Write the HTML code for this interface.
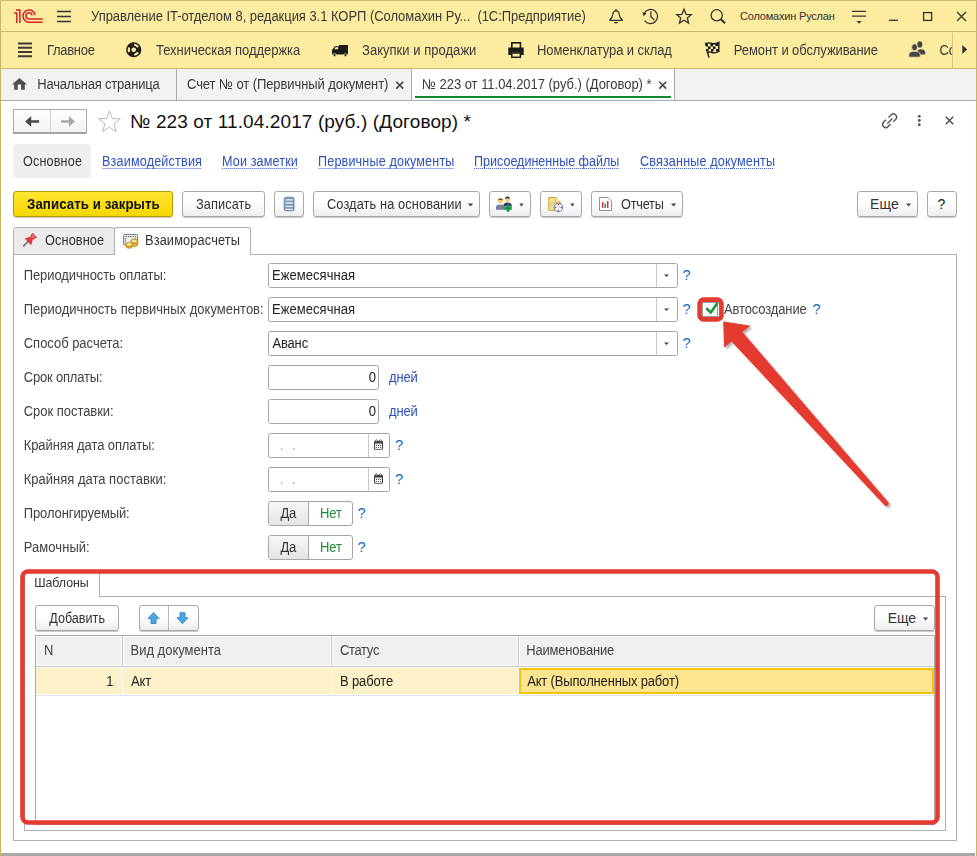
<!DOCTYPE html>
<html><head><meta charset="utf-8">
<style>
*{margin:0;padding:0;box-sizing:border-box}
html,body{width:977px;height:856px;overflow:hidden;background:#fff}
body{position:relative;font-family:"Liberation Sans",sans-serif;font-size:13px;color:#333}
.a{position:absolute}
.t{position:absolute;white-space:nowrap;line-height:1;transform:scaleY(1.1);transform-origin:0 11px}
.nt{transform:none}
svg{position:absolute;overflow:visible}
/* bars */
#title{left:0;top:0;width:977px;height:31px;background:#fbeca0;border-top:1px solid #cdbd6e;border-left:1px solid #c5b66a;border-right:1px solid #c5b66a}
#sect{left:0;top:31px;width:977px;height:38px;background:#fbeca0;border-top:1px solid #c9b96c;border-left:1px solid #c5b66a;border-right:1px solid #c5b66a;border-bottom:1px solid #c8b872}
#tabs{left:0;top:69px;width:977px;height:32px;background:#f2f2f2;border-left:1px solid #c9b55a;border-right:1px solid #c9b55a;border-bottom:1px solid #a9a9a9}
#form{left:0;top:101px;width:977px;height:755px;background:#fff;border-left:1px solid #c9b55a;border-right:1px solid #c9b55a}
.btn{position:absolute;border:1px solid #a9a9a9;border-radius:3px;background:linear-gradient(#ffffff 45%,#ededed);box-shadow:0 1px 0 rgba(0,0,0,.22)}
.inp{position:absolute;border:1px solid #a5a5a5;border-radius:2.5px;background:#fff}
.lbl{color:#424242}
.lnk{color:#2d50bd}
.q{color:#0f6cc4}
</style></head><body>

<!-- TITLE BAR -->
<div id="title" class="a"></div>
<svg style="left:0;top:0" width="977" height="32">
  <!-- 1C logo -->
  <path d="M14 12.24 H17.57 V22.9 H16.05 V13.75 H14 Z M16.05 9.2 H20.6 V22.9 H19.1 V10.7 H16.05 Z" fill="#d8232a"/>
  <g fill="none" stroke="#d8232a" stroke-width="1.55">
    <path d="M35.1 15.1 A6.1 6.1 0 1 0 29 22.15 H42.7"/>
    <path d="M32.1 15.3 A3.1 3.1 0 1 0 29 19 H42.7"/>
  </g>
  <!-- hamburger -->
  <g stroke="#333" stroke-width="1.4"><path d="M57 11.5H71M57 16.5H71M57 21.5H71"/></g>
</svg>
<div class="t" style="left:91.00px;top:10px;color:#3a3a3a;letter-spacing:-0.043px">Управление IT-отделом 8, редакция 3.1 КОРП (Соломахин Ру...&nbsp; (1С:Предприятие)</div>
<svg style="left:0;top:0" width="977" height="32" fill="none" stroke="#333" stroke-width="1.3">
  <!-- bell -->
  <path d="M609.6 20.3 Q612.3 18.2 612.8 14.4 Q613.2 10.8 616 10.8 Q618.8 10.8 619.2 14.4 Q619.7 18.2 622.4 20.3 Z" stroke-width="1.25" stroke-linejoin="round"/>
  <circle cx="616" cy="9.9" r="0.95" fill="#333" stroke="none"/>
  <path d="M613.7 22 H618.3 Q616 25 613.7 22 Z" fill="#333" stroke="none"/>
  <!-- history -->
  <path d="M644.4 12.8 A7.1 7.1 0 1 1 644.6 20.6"/>
  <path d="M642.3 12.3 L646.6 13.3 L643.6 16.2 Z" fill="#333" stroke="none"/>
  <path d="M650.9 11.6 V16.7 L654.4 20.1"/>
  <!-- star -->
  <path d="M684 9.3 L686.1 14.3 L691.3 14.6 L687.3 18 L688.6 23 L684 20.2 L679.4 23 L680.7 18 L676.7 14.6 L681.9 14.3 Z"/>
  <!-- search -->
  <circle cx="716.7" cy="15.3" r="5.6"/>
  <path d="M720.8 19.3 L725 23.3" stroke-width="2.2"/>
  <!-- filter -->
  <path d="M852 11.4 H866 M852 16.2 H866"/>
  <path d="M856.6 21 H861.6 L859.1 23.7 Z" fill="#333" stroke="none"/>
  <!-- min max close -->
  <path d="M889 20.3 H898"/>
  <rect x="923.6" y="12.6" width="8" height="7.8"/>
  <path d="M957 12 L966 21 M966 12 L957 21"/>
</svg>
<div class="t nt" style="left:740.00px;top:11px;font-size:11px;color:#333;letter-spacing:-0.195px">Соломахин Руслан</div>

<!-- SECTION BAR -->
<div id="sect" class="a"></div>
<svg style="left:0;top:0" width="977" height="70">
  <g stroke="#3a3a3a" stroke-width="2"><path d="M18 43.6H32M18 47.8H32M18 52H32M18 56.2H32"/></g>
  <!-- ball -->
  <circle cx="133.75" cy="49.75" r="7.6" fill="#231c1c"/>
  <path d="M129.26 51.94 A5.0 5.0 0 0 1 129.26 47.56 M134.27 44.78 A5.0 5.0 0 0 1 137.99 47.10 M137.99 52.40 A5.0 5.0 0 0 1 134.27 54.72" fill="none" stroke="#fbeca0" stroke-width="2.1"/>
  <circle cx="133.75" cy="49.75" r="2.3" fill="#fbeca0"/>
  <!-- truck -->
  <path d="M339 45 H348 V54.5 H332 V50 L335 46.3 H339 Z" fill="#1c1c1c"/>
  <path d="M335.5 47.3 H338.2 V49.2 H334.3 Z" fill="#fbeca0"/>
  <circle cx="334.5" cy="55" r="1.5" fill="#1c1c1c" stroke="#fbeca0" stroke-width=".7"/>
  <circle cx="345.5" cy="55" r="1.5" fill="#1c1c1c" stroke="#fbeca0" stroke-width=".7"/>
  <!-- printer -->
  <rect x="511.8" y="42.8" width="8.6" height="6" fill="none" stroke="#1c1c1c" stroke-width="1.6"/>
  <path d="M508.3 47.5 H523.7 V55 H520.5 V52.5 H511.5 V55 H508.3 Z" fill="#1c1c1c"/>
  <rect x="511.8" y="53" width="8.6" height="4.3" fill="none" stroke="#1c1c1c" stroke-width="1.5"/>
  <!-- flag -->
  <path d="M705 44 Q709 42 712 43.5 Q715.5 44.5 718.8 42.3 V51.5 Q715.5 53.5 712 52.5 Q709 51.2 707.5 52.5 L709 57.6" fill="none" stroke="#111" stroke-width="1.4"/>
  <g fill="#111"><rect x="705.5" y="44" width="2.5" height="2.5"/><rect x="710.5" y="44" width="2.5" height="2.5"/><rect x="715.5" y="43.5" width="2.5" height="2.5"/><rect x="708" y="46.5" width="2.5" height="2.5"/><rect x="713" y="46.5" width="2.5" height="2.5"/><rect x="706" y="49" width="2.5" height="2.5"/><rect x="711" y="49" width="2.5" height="2.5"/><rect x="716" y="49" width="2.5" height="2.5"/></g>
  <!-- people -->
  <g fill="#454545">
    <ellipse cx="919.8" cy="44.4" rx="2.5" ry="3.2"/>
    <path d="M916.8 54.6 V52.2 Q917.3 49.2 921 49.2 Q924.7 49.2 925.2 52.2 V54.6 Z"/>
  </g>
  <g fill="#454545" stroke="#fbeca0" stroke-width=".8">
    <ellipse cx="914.5" cy="47.3" rx="2.9" ry="3.5"/>
    <path d="M908.8 57.2 V54.6 Q909.3 51.2 914.5 51.2 Q919.7 51.2 920.2 54.6 V57.2 Z"/>
  </g>
  <path d="M952.5 32.5 V68" stroke="#d8c77e" stroke-width="1"/>
  <path d="M962.3 45 L967.2 49.5 L962.3 54 Z" fill="#333"/>
</svg>
<div class="t" style="left:47.00px;top:44px;color:#3a3a3a;letter-spacing:-0.301px">Главное</div>
<div class="t" style="left:156.00px;top:44px;color:#3a3a3a;letter-spacing:-0.035px">Техническая поддержка</div>
<div class="t" style="left:362.00px;top:44px;color:#3a3a3a;letter-spacing:0.031px">Закупки и продажи</div>
<div class="t" style="left:537.00px;top:44px;color:#3a3a3a;letter-spacing:-0.080px">Номенклатура и склад</div>
<div class="t" style="left:733.80px;top:44px;color:#3a3a3a;letter-spacing:-0.090px">Ремонт и обслуживание</div>
<div class="a" style="left:939.4px;top:40px;width:13px;height:20px;overflow:hidden"><div class="t" style="left:0;top:3.6px;color:#3a3a3a">Сотрудники</div></div>

<!-- TABS BAR -->
<div id="tabs" class="a"></div>
<div class="a" style="left:412px;top:69px;width:262px;height:31px;background:#fff"></div>
<div class="a" style="left:176px;top:69px;width:1px;height:31px;background:#a9a9a9"></div>
<div class="a" style="left:411px;top:69px;width:1px;height:31px;background:#a9a9a9"></div>
<div class="a" style="left:674px;top:69px;width:1px;height:31px;background:#a9a9a9"></div>
<div class="a" style="left:415px;top:96px;width:256px;height:2px;background:#14892f"></div>
<svg style="left:0;top:0" width="977" height="100">
  <path d="M19.5 77.9 L27 84.6 H24.8 V89.7 H21.1 V84.6 H17.8 V89.7 H14.2 V84.6 H12 Z" fill="#4e4e4e"/>
  <g stroke="#444" stroke-width="1.6"><path d="M396.3 81.7 L403.2 88.6 M403.2 81.7 L396.3 88.6"/><path d="M659.3 81.7 L666.2 88.6 M666.2 81.7 L659.3 88.6"/></g>
</svg>
<div class="t" style="left:37.20px;top:78px;color:#3a3a3a;letter-spacing:-0.193px">Начальная страница</div>
<div class="t" style="left:187.00px;top:78px;color:#3a3a3a;letter-spacing:-0.076px">Счет № от (Первичный документ)</div>
<div class="t" style="left:422.00px;top:78px;color:#3a3a3a;letter-spacing:-0.027px">№ 223 от 11.04.2017 (руб.) (Договор) *</div>

<!-- FORM -->
<div id="form" class="a"></div>


<!-- FORM HEADER -->
<div class="a" style="left:13px;top:109px;width:74px;height:25px;border:1px solid #ababab;border-bottom:2px solid #a3a3a3;background:linear-gradient(#ffffff,#f2f2f2)"></div>
<div class="a" style="left:50px;top:110px;width:1px;height:23px;background:#d0d0d0"></div>
<svg style="left:0;top:0" width="977" height="140">
  <path d="M25.2 121.5 L31.2 115.9 V120.2 H39.1 V122.8 H31.2 V127.1 Z" fill="#4a4a4a"/>
  <path d="M74.9 121.5 L68.9 115.9 V120.2 H61 V122.8 H68.9 V127.1 Z" fill="#a8a8a8"/>
  <path d="M109.4 111 L112.2 118.4 L120.3 118.8 L114 123.8 L116.1 131.5 L109.4 127.2 L102.7 131.5 L104.8 123.8 L98.5 118.8 L106.6 118.4 Z" fill="#fff" stroke="#b2bac4" stroke-width="1"/>
  <!-- link icon -->
  <g fill="none" stroke="#555" stroke-width="1.4">
    <path d="M888.5 117.5 L891 115 A2.8 2.8 0 0 1 895.8 119.2 L893.3 121.7"/>
    <path d="M890.7 124 L888.2 126.5 A2.8 2.8 0 0 1 883.5 122.3 L886 119.8"/>
    <path d="M887.3 123.8 L892.3 118.6"/>
  </g>
  <g fill="#555"><circle cx="919.3" cy="116.3" r="1.4"/><circle cx="919.3" cy="120.5" r="1.4"/><circle cx="919.3" cy="124.7" r="1.4"/></g>
  <path d="M945.8 116.8 L953.2 124.2 M953.2 116.8 L945.8 124.2" stroke="#444" stroke-width="1.3"/>
</svg>
<div class="t nt" style="left:130.00px;top:112px;font-size:19px;color:#111;letter-spacing:0.108px">№ 223 от 11.04.2017 (руб.) (Договор) *</div>

<div class="a" style="left:13px;top:144px;width:78px;height:34px;background:#efefef;border-radius:4px"></div>
<div class="t" style="left:23.00px;top:156px;font-size:12.6px;color:#333;letter-spacing:0.168px">Основное</div>
<div class="t lnk" style="left:102.00px;top:156px;font-size:12.6px;letter-spacing:0.178px">Взаимодействия</div>
<div class="t lnk" style="left:222.00px;top:156px;font-size:12.6px;letter-spacing:0.130px">Мои заметки</div>
<div class="t lnk" style="left:318.00px;top:156px;font-size:12.6px;letter-spacing:0.162px">Первичные документы</div>
<div class="t lnk" style="left:474.00px;top:156px;font-size:12.6px;letter-spacing:-0.030px">Присоединенные файлы</div>
<div class="t lnk" style="left:640.00px;top:156px;font-size:12.6px;letter-spacing:0.155px">Связанные документы</div>
<svg style="left:0;top:0" width="977" height="180">
  <g stroke="#3558c4" stroke-width="1" stroke-dasharray="1 1">
    <path d="M102.4 168.5 H201.1 M222.3 168.5 H297 M318.4 168.5 H453.5 M474.2 168.5 H618.8 M640 168.5 H774.2"/>
  </g>
</svg>

<!-- COMMAND BAR -->
<div class="a" style="left:13px;top:191px;width:160px;height:26px;border:1px solid #b49c00;border-radius:3px;background:linear-gradient(#ffe630,#f6d600);box-shadow:0 1px 1px rgba(0,0,0,.22)"></div>
<div class="t" style="left:27.00px;top:198px;font-weight:bold;color:#111;font-size:13.3px;letter-spacing:0.059px">Записать и закрыть</div>
<div class="btn" style="left:182px;top:191px;width:83px;height:26px"></div>
<div class="t" style="left:196.00px;top:199px;font-size:12.7px;letter-spacing:0.126px">Записать</div>
<div class="btn" style="left:274px;top:191px;width:30px;height:26px"></div>
<div class="btn" style="left:313px;top:191px;width:167px;height:26px"></div>
<div class="t" style="left:327.00px;top:199px;font-size:12.8px;letter-spacing:0.101px">Создать на основании</div>
<div class="btn" style="left:489px;top:191px;width:42px;height:26px"></div>
<div class="btn" style="left:540px;top:191px;width:42px;height:26px"></div>
<div class="btn" style="left:591px;top:191px;width:92px;height:26px"></div>
<div class="t" style="left:621.00px;top:199px;font-size:12.8px;letter-spacing:-0.280px">Отчеты</div>
<div class="btn" style="left:857px;top:191px;width:61px;height:26px"></div>
<div class="t nt" style="left:870.00px;top:197px;font-size:14px;letter-spacing:0.120px">Еще</div>
<div class="btn" style="left:927px;top:191px;width:30px;height:26px"></div>
<div class="t nt" style="left:937.60px;top:197px;font-size:14px;color:#222">?</div>
<svg style="left:0;top:0" width="977" height="230">
  <g fill="#444">
    <path d="M467.8 203.5 H473.2 L470.5 206.5 Z"/>
    <path d="M519.3 203.5 H523.7 L521.5 206.5 Z"/>
    <path d="M570.2 203.5 H574.6 L572.4 206.5 Z"/>
    <path d="M671 203.5 H676.2 L673.6 206.5 Z"/>
    <path d="M906 203.5 H911.2 L908.6 206.5 Z"/>
  </g>
  <!-- list icon -->
  <rect x="284.2" y="197.2" width="9.8" height="13.6" rx="1.5" fill="#7d9ab5" stroke="#5e7f9d" stroke-width=".8"/>
  <g stroke="#e3eef8" stroke-width="1.3"><path d="M285.5 199.8H292.8M285.5 203H292.8M285.5 206.3H292.8M285.5 209.3H292.8"/></g>
  <!-- people add icon -->
  <path d="M503 206.5 Q503.5 202.6 507.5 202.6 Q511.5 202.6 512 206.5 Z" fill="#2c3566"/>
  <circle cx="507.5" cy="199.4" r="2.5" fill="#f2cf72"/>
  <path d="M505 198.8 Q505.2 196.6 507.5 196.6 Q509.8 196.6 510 198.8 Q507.5 197.6 505 198.8 Z" fill="#2a2a50"/>
  <path d="M496 209.8 V207 Q496.5 204.6 500.5 204.6 Q504.3 204.6 504.6 207 V209.8 Z" fill="#5a86b4"/>
  <path d="M500.1 205 H500.9 L501.1 209.8 H499.9 Z" fill="#e0704a"/>
  <circle cx="500.5" cy="201" r="2.5" fill="#f2cf72"/>
  <path d="M498 200.4 Q498.2 198.2 500.5 198.2 Q502.8 198.2 503 200.4 Q500.5 199.2 498 200.4 Z" fill="#7a4310"/>
  <path d="M504.2 208.3 H511.8 M508.1 204.3 V211.8" stroke="#0f9a3c" stroke-width="2.7"/>
  <!-- doc clock -->
  <path d="M548.7 197.5 H555.8 L560.5 202.2 V210.3 H548.7 Z" fill="#f5e28e" stroke="#caa33e" stroke-width="1"/>
  <path d="M555.8 197.5 V202.2 H560.5" fill="#f9eeb8" stroke="#caa33e" stroke-width=".8"/>
  <g stroke="#d8c070" stroke-width=".9"><path d="M550 202.8 H555 M550 204.6 H553 M550 206.5 H553"/></g>
  <circle cx="558.4" cy="207.4" r="4.2" fill="#fff" stroke="#5a8abc" stroke-width="1.1"/>
  <g fill="#e02020"><circle cx="558.4" cy="204.6" r=".75"/><circle cx="558.4" cy="210.2" r=".75"/><circle cx="555.6" cy="207.4" r=".75"/><circle cx="561.2" cy="207.4" r=".75"/></g>
  <path d="M558.4 207.4 L559.6 205.3" stroke="#8aa8d8" stroke-width=".8"/>
  <!-- report icon -->
  <path d="M599.5 197.5 H608 L611.5 201 V210.5 H599.5 Z" fill="#fff" stroke="#888" stroke-width=".9"/>
  <rect x="602" y="202" width="1.5" height="6" fill="#d63a3a"/><rect x="604.5" y="203.5" width="1.5" height="4.5" fill="#2aa04a"/><rect x="607" y="201" width="1.5" height="7" fill="#b94040"/>
</svg>

<!-- TAB STRIP -->
<div class="a" style="left:13px;top:254px;width:944px;height:587px;border:1px solid #b0b0b0;border-top-color:#b0b0b0"></div>
<div class="a" style="left:13px;top:227px;width:102px;height:28px;background:#ebebeb;border:1px solid #b0b0b0;border-radius:3px 3px 0 0"></div>
<div class="a" style="left:114px;top:227px;width:137px;height:28px;background:#fff;border:1px solid #b0b0b0;border-bottom:none;border-radius:3px 3px 0 0"></div>
<div class="t" style="left:45.00px;top:235px;font-size:12.8px;letter-spacing:0.071px">Основное</div>
<div class="t" style="left:145.00px;top:235px;font-size:12.8px;letter-spacing:0.118px">Взаиморасчеты</div>
<svg style="left:0;top:0" width="977" height="260">
  <!-- pin -->
  <path d="M28.3 241.3 L23.3 246.4" stroke="#6d6d6d" stroke-width="1.5"/>
  <path d="M32.4 233 L36.8 237.5 L32.6 239.3 L31 244.7 L25.1 238.6 L30.4 237.1 Z" fill="#e0393d" stroke="#c42a2e" stroke-width=".5"/>
  <path d="M32.6 234.6 L35 237 L31.2 238.2 Z" fill="#f07a7c"/>
  <!-- coins -->
  <rect x="123.6" y="234.4" width="14" height="10.8" rx="1" fill="#ececec" stroke="#777" stroke-width="1"/>
  <rect x="125.5" y="236.5" width="10" height="7" fill="none" stroke="#555" stroke-width="1" stroke-dasharray="1.2 1.2"/>
  <g stroke="#b98a1a" stroke-width=".6">
   <rect x="130.8" y="239" width="7" height="7.5" rx="2.5" fill="#e2b13a"/>
   <rect x="125.8" y="242.4" width="7" height="5.8" rx="2.4" fill="#e2b13a"/>
  </g>
  <g fill="#fff3c0"><rect x="132" y="240.2" width="4.5" height="1.6" rx=".8"/><rect x="127" y="243.6" width="4.5" height="1.6" rx=".8"/></g>
  <g fill="#c4911c"><rect x="131.5" y="243" width="6" height=".8"/><rect x="126.5" y="246" width="6" height=".8"/></g>
</svg>


<!-- FIELDS -->
<div class="t lbl" style="left:23.75px;top:269px;letter-spacing:-0.102px">Периодичность оплаты:</div>
<div class="t lbl" style="left:23.75px;top:303px;letter-spacing:0.001px">Периодичность первичных документов:</div>
<div class="t lbl" style="left:23.75px;top:337px;letter-spacing:-0.026px">Способ расчета:</div>
<div class="t lbl" style="left:23.75px;top:371px;letter-spacing:-0.187px">Срок оплаты:</div>
<div class="t lbl" style="left:23.75px;top:405px;letter-spacing:-0.036px">Срок поставки:</div>
<div class="t lbl" style="left:23.75px;top:439px;letter-spacing:-0.102px">Крайняя дата оплаты:</div>
<div class="t lbl" style="left:23.75px;top:473px;letter-spacing:0.001px">Крайняя дата поставки:</div>
<div class="t lbl" style="left:23.75px;top:507px;letter-spacing:-0.108px">Пролонгируемый:</div>
<div class="t lbl" style="left:23.75px;top:541px;letter-spacing:0.054px">Рамочный:</div>
<div class="inp" style="left:268px;top:263px;width:410px;height:25px"></div>
<div class="a" style="left:656px;top:264px;width:1px;height:23px;background:#c8c8c8"></div>
<div class="t" style="left:272.00px;top:269px;color:#222;letter-spacing:0.060px">Ежемесячная</div>
<div class="t q nt" style="left:682.40px;top:268px;font-size:14.6px">?</div>
<div class="inp" style="left:268px;top:297px;width:410px;height:25px"></div>
<div class="a" style="left:656px;top:298px;width:1px;height:23px;background:#c8c8c8"></div>
<div class="t" style="left:272.00px;top:303px;color:#222;letter-spacing:0.060px">Ежемесячная</div>
<div class="t q nt" style="left:682.40px;top:302px;font-size:14.6px">?</div>
<div class="inp" style="left:268px;top:331px;width:410px;height:25px"></div>
<div class="a" style="left:656px;top:332px;width:1px;height:23px;background:#c8c8c8"></div>
<div class="t" style="left:272.40px;top:337px;color:#222;letter-spacing:-0.150px">Аванс</div>
<div class="t q nt" style="left:682.40px;top:336px;font-size:14.6px">?</div>
<div class="inp" style="left:268px;top:365px;width:111px;height:25px"></div>
<div class="t" style="left:368.80px;top:371px;color:#222">0</div>
<div class="t lnk" style="left:389.00px;top:371px;color:#2d50bd;letter-spacing:-0.167px">дней</div>
<div class="inp" style="left:268px;top:399px;width:111px;height:25px"></div>
<div class="t" style="left:368.80px;top:405px;color:#222">0</div>
<div class="t lnk" style="left:389.00px;top:405px;color:#2d50bd;letter-spacing:-0.167px">дней</div>
<div class="inp" style="left:268px;top:433px;width:122px;height:25px"></div>
<div class="a" style="left:368px;top:434px;width:1px;height:23px;background:#c8c8c8"></div>
<div class="t q nt" style="left:394.90px;top:438px;font-size:14.6px">?</div>
<div class="inp" style="left:268px;top:467px;width:122px;height:25px"></div>
<div class="a" style="left:368px;top:468px;width:1px;height:23px;background:#c8c8c8"></div>
<div class="t q nt" style="left:394.90px;top:472px;font-size:14.6px">?</div>
<div class="a" style="left:268px;top:501px;width:85px;height:25px;border:1px solid #a5a5a5;border-radius:3px;background:#fff;overflow:hidden"><div class="a" style="left:0;top:0;width:40px;height:23px;background:linear-gradient(#f7f7f7,#e4e4e4);border-right:1px solid #a8a8a8"></div></div>
<div class="t" style="left:280.40px;top:507px;color:#333;letter-spacing:-0.120px">Да</div>
<div class="t" style="left:320.00px;top:507px;color:#1e8c3c;letter-spacing:-0.120px">Нет</div>
<div class="t q nt" style="left:357.40px;top:506px;font-size:14.6px">?</div>
<div class="a" style="left:268px;top:535px;width:85px;height:25px;border:1px solid #a5a5a5;border-radius:3px;background:#fff;overflow:hidden"><div class="a" style="left:0;top:0;width:40px;height:23px;background:linear-gradient(#f7f7f7,#e4e4e4);border-right:1px solid #a8a8a8"></div></div>
<div class="t" style="left:280.40px;top:541px;color:#333;letter-spacing:-0.120px">Да</div>
<div class="t" style="left:320.00px;top:541px;color:#1e8c3c;letter-spacing:-0.120px">Нет</div>
<div class="t q nt" style="left:357.40px;top:540px;font-size:14.6px">?</div>
<svg style="left:0;top:0" width="977" height="856"><g fill="#444"><path d="M664 274.5 H669 L666.5 277 Z"/><path d="M664 308.5 H669 L666.5 311 Z"/><path d="M664 342.5 H669 L666.5 345 Z"/></g><rect x="374" y="440.7" width="9" height="9.1" rx="1.3" fill="#444"/><rect x="375.1" y="443.6" width="6.8" height="5.3" fill="#fff"/><g fill="#444"><circle cx="376.5" cy="445.4" r=".6"/><circle cx="376.5" cy="447.5" r=".6"/><circle cx="378.5" cy="445.4" r=".6"/><circle cx="378.5" cy="447.5" r=".6"/><circle cx="380.5" cy="445.4" r=".6"/><circle cx="380.5" cy="447.5" r=".6"/></g><g fill="#fff" stroke="#444" stroke-width=".7"><circle cx="376.5" cy="440.6" r=".85"/><circle cx="380.5" cy="440.6" r=".85"/></g><rect x="281" y="448.5" width="1.2" height="1.2" fill="#c87a2a"/><rect x="293.2" y="448.5" width="1.2" height="1.2" fill="#4a6fb0"/><rect x="374" y="474.7" width="9" height="9.1" rx="1.3" fill="#444"/><rect x="375.1" y="477.6" width="6.8" height="5.3" fill="#fff"/><g fill="#444"><circle cx="376.5" cy="479.4" r=".6"/><circle cx="376.5" cy="481.5" r=".6"/><circle cx="378.5" cy="479.4" r=".6"/><circle cx="378.5" cy="481.5" r=".6"/><circle cx="380.5" cy="479.4" r=".6"/><circle cx="380.5" cy="481.5" r=".6"/></g><g fill="#fff" stroke="#444" stroke-width=".7"><circle cx="376.5" cy="474.6" r=".85"/><circle cx="380.5" cy="474.6" r=".85"/></g><rect x="281" y="482.5" width="1.2" height="1.2" fill="#c87a2a"/><rect x="293.2" y="482.5" width="1.2" height="1.2" fill="#4a6fb0"/></svg>

<div class="a" style="left:702px;top:302px;width:16px;height:15px;border:1px solid #9a9a9a;background:#fff"></div>
<svg style="left:0;top:0" width="977" height="856"><path d="M706.3 308.2 L710.8 312.6 L717.6 302.8" fill="none" stroke="#1a9a3a" stroke-width="2.6"/></svg>
<div class="t" style="left:724.00px;top:303px;color:#444;letter-spacing:-0.135px">Автосоздание</div>
<div class="t q nt" style="left:812.60px;top:302px;font-size:14.6px">?</div>

<!-- GROUP SHABLONY -->
<div class="a" style="left:24px;top:596px;width:922px;height:235px;border:1px solid #b0b0b0"></div>
<div class="a" style="left:24px;top:572px;width:76px;height:25px;background:#fff;border:1px solid #b0b0b0;border-bottom:none"></div>
<div class="t" style="left:34.20px;top:577px;font-size:12.4px;color:#333;letter-spacing:-0.034px">Шаблоны</div>
<div class="btn" style="left:35px;top:605px;width:84px;height:26px"></div>
<div class="t" style="left:49.20px;top:613px;font-size:12.6px;letter-spacing:0.017px">Добавить</div>
<div class="btn" style="left:139px;top:605px;width:60px;height:26px"></div>
<div class="a" style="left:168px;top:606px;width:1px;height:24px;background:#b8b8b8"></div>
<div class="btn" style="left:874px;top:605px;width:61px;height:26px"></div>
<div class="t nt" style="left:887.80px;top:611px;font-size:14px;letter-spacing:-0.120px">Еще</div>
<svg style="left:0;top:0" width="977" height="856">
  <path d="M923 617.5 H928.2 L925.6 620.5 Z" fill="#444"/>
  <path d="M153.5 612.5 L159 618.5 H156 V623.5 H151 V618.5 H148 Z" fill="#46a8e8" stroke="#2a7cc0" stroke-width=".8"/>
  <path d="M182.5 623.7 L188 617.7 H185 V612.7 H180 V617.7 H177 Z" fill="#46a8e8" stroke="#2a7cc0" stroke-width=".8"/>
</svg>
<div class="a" style="left:35px;top:635px;width:900px;height:190px;border:1px solid #a9a9a9;background:#fff"></div>
<div class="a" style="left:36px;top:636px;width:898px;height:30px;background:#f0f0f0;box-shadow:inset 1px 1px 0 #fff;border-bottom:1px solid #fff"></div>
<div class="a" style="left:36px;top:666px;width:898px;height:1px;background:#c6c6c6"></div>
<div class="a" style="left:36px;top:668px;width:898px;height:26px;background:#fdf1c9"></div>
<div class="a" style="left:36px;top:695px;width:898px;height:1px;background:#e3e3e3"></div>
<div class="a" style="left:121px;top:636px;width:3px;height:30px;background:#c6c6c6;border-left:1px solid #fff;border-right:1px solid #fff"></div>
<div class="a" style="left:330px;top:636px;width:3px;height:30px;background:#c6c6c6;border-left:1px solid #fff;border-right:1px solid #fff"></div>
<div class="a" style="left:517px;top:636px;width:3px;height:30px;background:#c6c6c6;border-left:1px solid #fff;border-right:1px solid #fff"></div>
<div class="a" style="left:122px;top:668px;width:1px;height:26px;background:#fff"></div>
<div class="a" style="left:331px;top:668px;width:1px;height:26px;background:#fff"></div>
<div class="a" style="left:518px;top:668px;width:1px;height:26px;background:#fff"></div>
<div class="a" style="left:519px;top:668px;width:415px;height:26px;background:#fde48f;border:2px solid #f5c20a"></div>
<div class="t" style="left:43.90px;top:644px;color:#444">N</div>
<div class="t" style="left:130.50px;top:644px;color:#444;letter-spacing:-0.009px">Вид документа</div>
<div class="t" style="left:339.90px;top:644px;color:#444;letter-spacing:-0.320px">Статус</div>
<div class="t" style="left:526.20px;top:644px;color:#444;letter-spacing:-0.182px">Наименование</div>
<div class="t" style="left:106.30px;top:675px;color:#222">1</div>
<div class="t" style="left:130.90px;top:675px;color:#222;letter-spacing:-0.120px">Акт</div>
<div class="t" style="left:339.90px;top:675px;color:#222;letter-spacing:-0.126px">В работе</div>
<div class="t" style="left:527.20px;top:675px;color:#222;letter-spacing:-0.159px">Акт (Выполненных работ)</div>

<div class="a" style="left:1px;top:853px;width:974px;height:3px;background:#a8a8a8"></div>

<!-- ANNOTATIONS -->
<svg style="left:0;top:0" width="977" height="856">
  <defs><filter id="sh" x="-20%" y="-20%" width="140%" height="140%"><feGaussianBlur in="SourceAlpha" stdDeviation="0.9"/><feOffset dx="1.5" dy="1.5"/><feComponentTransfer><feFuncA type="linear" slope="0.32"/></feComponentTransfer><feMerge><feMergeNode/><feMergeNode in="SourceGraphic"/></feMerge></filter></defs>
  <rect x="22.5" y="571.5" width="915" height="251" rx="5.5" fill="none" stroke="#e53a2f" stroke-width="4.6"/>
  <rect x="699.6" y="299.6" width="21.8" height="19.8" rx="4" fill="none" stroke="#e53a2f" stroke-width="4.6"/>
  <path filter="url(#sh)" d="M723.8 322 L749.3 326 L741.5 331.8 L887.8 502.6 A1.8 1.8 0 0 1 885.2 505 L731.5 340.5 L724.6 346.6 Z" fill="#e53a2f" stroke="#e53a2f" stroke-width="1.2" stroke-linejoin="round"/>
</svg>

</body></html>
